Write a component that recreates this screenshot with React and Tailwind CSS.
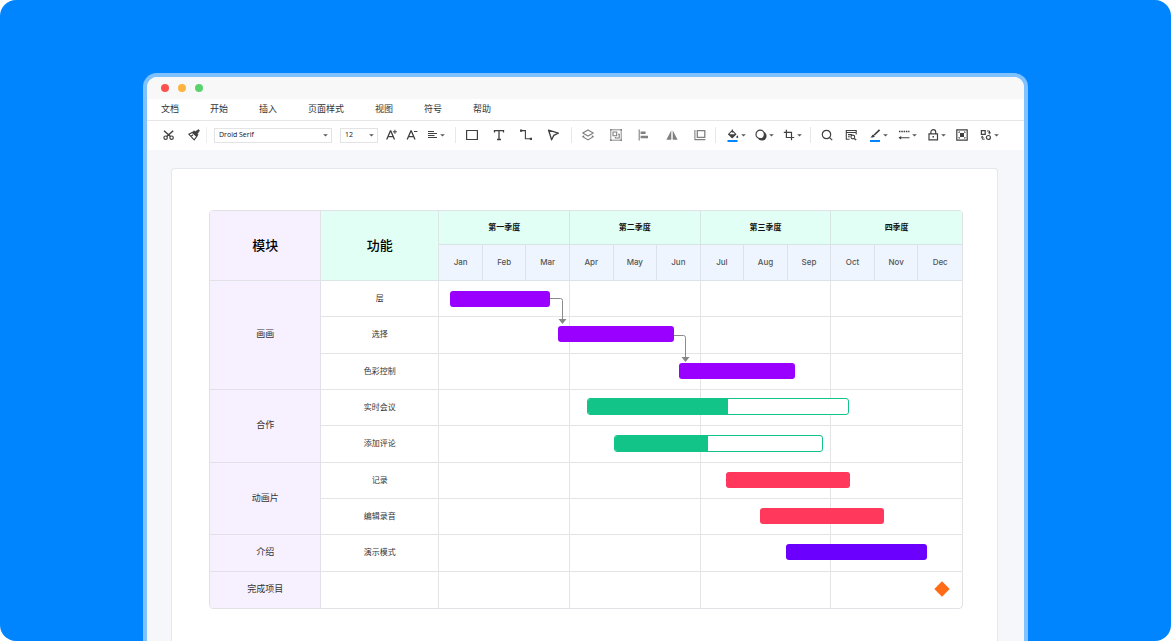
import React from "react";
import clsx from "clsx";

const MENU = ["文档", "开始", "插入", "页面样式", "视图", "符号", "帮助"];

const QUARTERS = ["第一季度", "第二季度", "第三季度", "四季度"];

const MONTHS = ["Jan", "Feb", "Mar", "Apr", "May", "Jun", "Jul", "Aug", "Sep", "Oct", "Nov", "Dec"];

const ROWS = [
  { module: "画画", span: 3, feature: "层", height: "h-9" },
  { feature: "选择", height: "h-[37px]" },
  { feature: "色彩控制", height: "h-9" },
  { module: "合作", span: 2, feature: "实时会议", height: "h-9" },
  { feature: "添加评论", height: "h-[37px]" },
  { module: "动画片", span: 2, feature: "记录", height: "h-9" },
  { feature: "编辑录音", height: "h-9" },
  { module: "介绍", span: 1, feature: "演示模式", height: "h-[37px]" },
  { module: "完成项目", span: 1, feature: "", height: "h-9" },
];

// start / end are in months from the beginning of the year, top in px from the table's top
const TASKS = [
  { id: 1, start: 0.25, end: 2.55, top: 80, color: "bg-[#9900ff]" },
  { id: 2, start: 2.73, end: 5.39, top: 115, color: "bg-[#9900ff]" },
  { id: 3, start: 5.5, end: 8.17, top: 152, color: "bg-[#9900ff]" },
  { id: 4, start: 3.39, end: 9.4, top: 187, progress: 54 },
  { id: 5, start: 4.01, end: 8.8, top: 224, progress: 45 },
  { id: 6, start: 6.58, end: 9.43, top: 261, color: "bg-[#ff385c]" },
  { id: 7, start: 7.36, end: 10.21, top: 297, color: "bg-[#ff385c]" },
  { id: 8, start: 7.95, end: 11.19, top: 333, color: "bg-[#6c00ff]" },
];

const LINKS = [
  { id: "1-2", at: 2.55, top: 87, drop: 26, run: 13 },
  { id: "2-3", at: 5.39, top: 124, drop: 27, run: 12 },
];

const MILESTONE = { at: 11.54, top: 370 };

const toPercent = (month) => `${(month / 12) * 100}%`;

const Icon = ({ children, muted }) => (
  <svg
    viewBox="0 0 12 12"
    className={clsx("size-3 shrink-0 overflow-visible", muted ? "text-[#808080]" : "text-[#404040]")}
    fill="none"
    stroke="currentColor"
    strokeWidth="1.1"
    aria-hidden="true"
  >
    {children}
  </svg>
);

const Caret = () => (
  <svg viewBox="0 0 5 3" className="h-[3px] w-[5px] shrink-0" fill="#555555" aria-hidden="true">
    <path d="M.2.3h4.600L2.500 2.600z" />
  </svg>
);

const Tool = ({ label, caret, muted, children }) => (
  <button
    type="button"
    aria-label={label}
    className={clsx("flex shrink-0 items-center gap-0.5", caret && "-mr-0.5")}
  >
    <Icon muted={muted}>{children}</Icon>
    {caret && <Caret />}
  </button>
);

const Select = ({ label, options, className }) => (
  <div className={clsx("relative flex h-4 shrink-0 items-center", className)}>
    <select
      aria-label={label}
      className="h-[15px] w-full appearance-none border border-[#e3e3e3] bg-white pl-1 font-['Open_Sans',sans-serif] text-[7px] leading-3 text-[#111111]"
    >
      {options.map((option) => (
        <option key={option}>{option}</option>
      ))}
    </select>
    <span className="pointer-events-none absolute inset-y-0 right-1 flex items-center">
      <Caret />
    </span>
  </div>
);

const Toolbar = () => (
  <div className="flex h-[29px] items-center overflow-hidden pb-px pl-4">
    <div className="flex h-4 items-center gap-[13px] border-r border-[#efefef] pr-1.5">
      <Tool label="剪切">
        <circle cx="2.6" cy="8.700" r="1.700" strokeWidth="1.200" />
        <circle cx="8.600" cy="8.700" r="1.700" strokeWidth="1.200" />
        <path d="M1 1.800 7.500 7.500M10.200 1.800 3.700 7.500" strokeWidth="1.500" />
      </Tool>
      <Tool label="格式刷">
        <path d="M.8 5.200 4.200 3.400 8.800 7.400 6.200 10.800z" />
        <path d="M4.200 3.400 6 1.800l1.400.8L10.600.6l.9.9-2 3.200.6 1.200-1.500 1.700z" fill="currentColor" strokeWidth="0.600" />
        <path d="M3.200 7.200 5 5.800" />
      </Tool>
    </div>

    <div className="flex h-4 items-center gap-2 border-r border-[#e8e8e8] pr-3 pl-[7px]">
      <Select label="字体" options={["Droid Serif"]} className="w-[118px]" />
      <Select label="字号" options={["12"]} className="w-[38px]" />
      <Tool label="增大字号">
        <path d="M.7 10.400 4.400 2h.4l3.700 8.400M2.100 7.600h5" strokeWidth="1.300" />
        <path d="M8.900.8v4M6.900 2.800h4" strokeWidth="1" />
      </Tool>
      <Tool label="减小字号">
        <path d="M1.200 10.400 4.900 2h.4L9 10.400M2.600 7.600h5" strokeWidth="1.300" />
        <path d="M8 2.500h3.400" strokeWidth="1" />
      </Tool>
      <Tool label="对齐" caret>
        <path d="M2 2.500h6M2 4.500h9M2 6.500h6.500M2 8.500h9" />
      </Tool>
    </div>

    <div className="flex h-4 items-center gap-[15px] border-r border-[#e8e8e8] pr-3 pl-2.5">
      <Tool label="矩形">
        <path d="M.6 1.500h10.800v9H.6z" strokeWidth="1.200" />
      </Tool>
      <Tool label="文本">
        <path d="M1.500 3.600V1.600h9v2M6 1.600v9M4 10.500h4" strokeWidth="1.300" />
      </Tool>
      <Tool label="连接线">
        <path d="M1 1.600h4.400v8.200H11" />
        <path d="M0 .5h2.200v2.200H0zM9.800 8.700H12v2.200H9.800z" fill="currentColor" stroke="none" />
      </Tool>
      <Tool label="选择">
        <path d="M1.600 1.200 11.300 4.200 6.800 6.400 4.600 10.800z" strokeWidth="1.300" strokeLinejoin="round" />
      </Tool>
    </div>

    <div className="flex h-4 items-center gap-4 border-r border-[#e8e8e8] pr-[9px] pl-2.5">
      <Tool label="图层" muted>
        <path d="M6 1 11.200 4 6 7 .8 4z" />
        <path d="M2.200 6.800.8 7.800 6 10.900 11.200 7.800 9.800 6.800" />
      </Tool>
      <Tool label="组合" muted>
        <path d="M.8.8h10.400v10.400H.8z" strokeWidth="0.900" />
        <path d="M3 3h3.700v3.700H3zM8 5.200h1.200V9H5.400V8" />
        <path d="M0 0h1.600v1.600H0zM10.400 0H12v1.600h-1.600zM0 10.400h1.600V12H0zM10.400 10.400H12V12h-1.600z" fill="currentColor" stroke="none" />
      </Tool>
      <Tool label="左对齐" muted>
        <path d="M1.200.5v11" />
        <path d="M2.600 2.400h5v2.500h-5zM2.600 6.800H10v2.500H2.600z" fill="currentColor" stroke="none" />
      </Tool>
      <Tool label="翻转" muted>
        <path d="M5.300 1.200v9.600H.4zM6.700 1.200v9.600h4.900z" fill="currentColor" stroke="none" />
      </Tool>
      <Tool label="等大小" muted>
        <path d="M3.300 1.600h7.500v6.800H3.300z" strokeWidth="1.300" />
        <path d="M.9 1v9.600h10.500" />
      </Tool>
    </div>

    <div className="flex h-4 items-center gap-[11px] border-r border-[#e8e8e8] pr-2.5 pl-[11px]">
      <Tool label="填充" caret>
        <path d="M5.400.4v3M5.200 1.600 1.600 5.200 5.200 8.700 8.800 5.200z" />
        <path d="M1.600 5.200h7.200L5.200 8.700zM10.300 6.200c.7 1 1 1.500 1 1.900a1 1 0 0 1-2 0c0-.4.3-.9 1-1.900z" fill="currentColor" stroke="none" />
        <path d="M.5 12h10" stroke="#0085ff" strokeWidth="2" />
      </Tool>
      <Tool label="阴影" caret>
        <circle cx="7" cy="7" r="4.600" fill="currentColor" stroke="none" />
        <circle cx="5.200" cy="5.400" r="4.200" fill="white" strokeWidth="1.200" />
      </Tool>
      <Tool label="裁剪" caret>
        <path d="M3.400.8v7.700h7.800M.8 3.400h7.700v7.800" strokeWidth="1.200" />
      </Tool>
    </div>

    <div className="flex h-4 items-center gap-3 pl-2.5">
      <Tool label="搜索">
        <circle cx="5.500" cy="5.500" r="4.200" strokeWidth="1.200" />
        <path d="m8.600 8.600 2.600 2.600" strokeWidth="1.200" />
      </Tool>
      <Tool label="查找">
        <path d="M4.500 10.300H1.300V1.500h9.900v4M1.300 3.500h9.900M3 5.600h4M3 7.700h1.800" />
        <circle cx="7.800" cy="8" r="1.900" />
        <path d="m9.200 9.400 2 1.700" strokeWidth="1.300" />
      </Tool>
      <Tool label="线条颜色" caret>
        <path d="M10.600.8 5.200 6" strokeWidth="1.700" />
        <path d="M4.200 5.400 6 7.200C5 8.500 3 8.600 1.300 8.400c1.300-.8 1.500-2.400 2.900-3z" fill="currentColor" stroke="none" />
        <path d="M1 12h10" stroke="#0085ff" strokeWidth="2" />
      </Tool>
      <Tool label="线条样式" caret>
        <path d="M1 2.500h10.500" strokeWidth="1.500" strokeDasharray="1.500 .8" />
        <path d="M1.500 8.800h10" />
        <path d="M.4 8.800 3.200 7v3.600z" fill="currentColor" stroke="none" />
      </Tool>
      <Tool label="锁定" caret>
        <path d="M2 4.800h8.500v6H2zM3.900 4.800V3a2.400 2.400 0 0 1 4.800 0v1.800" strokeWidth="1.200" />
        <path d="M5.500 7h1.500v1.500H5.500z" fill="currentColor" stroke="none" />
      </Tool>
      <Tool label="适应画布">
        <path d="M.8.8h10.400v10.400H.8z" strokeWidth="1.200" />
        <path d="M4 4h4v4H4z" fill="currentColor" stroke="none" />
        <path d="M2.900 4V2.900H4M8 2.900h1.100V4M9.100 8v1.100H8M4 9.100H2.900V8" strokeWidth="0.900" />
      </Tool>
      <Tool label="替换形状" caret>
        <path d="M1.400 1.600h3.800v3.800H1.400z" strokeWidth="1.200" />
        <circle cx="8.400" cy="8.500" r="2" strokeWidth="1.200" />
        <path d="M7 2h2.500v2.500M8.200 3.600l1.300 1.200 1.300-1.200M4.600 10.200H2.300V7.500M1 8.500l1.300-1.200 1.300 1.200" strokeWidth="1" />
      </Tool>
    </div>
  </div>
);

const Bar = ({ task }) => {
  const outlined = task.progress !== undefined;
  return (
    <div
      className={clsx(
        "absolute overflow-hidden rounded-[3px]",
        outlined ? "h-[17px] border border-[#13c489] bg-white" : "h-4",
        task.color
      )}
      style={{ left: toPercent(task.start), width: toPercent(task.end - task.start), top: task.top }}
    >
      {outlined && <div className="h-full bg-[#13c489]" style={{ width: `${task.progress}%` }} />}
    </div>
  );
};

// Elbow connector that leaves the end of one bar and points down at the next
const Link = ({ link }) => {
  const { run, drop } = link;
  return (
    <svg
      className="absolute"
      width={run + 5}
      height={drop}
      style={{ left: toPercent(link.at), top: link.top }}
      fill="none"
      aria-hidden="true"
    >
      <path d={`M0 .5H${run - 2.5}q2 0 2 2V${drop - 4}`} stroke="#8a8a8a" />
      <path d={`M${run - 4.5} ${drop - 5}h8l-4 5z`} fill="#868686" />
    </svg>
  );
};

const GanttChart = () => (
  <div className="relative overflow-hidden rounded-[4px] border border-[#e2e2e6]">
    <table className="w-full table-fixed border-separate border-spacing-0 text-center text-[8px] leading-3">
      <colgroup>
        <col className="w-[14.8%]" />
        <col className="w-[15.7%]" />
        {MONTHS.map((month) => (
          <col key={month} />
        ))}
      </colgroup>
      <thead>
        <tr className="h-[34px]">
          <th rowSpan={2} className="border-r border-b border-[#e2e2e6] bg-[#f6f0ff] px-0 pt-0 pb-0.5 text-[13px] font-medium text-black">
            模块
          </th>
          <th rowSpan={2} className="border-r border-b border-[#dbe6e6] bg-[#e1fff4] px-0 pt-0 pb-0.5 text-[13px] font-medium text-black">
            功能
          </th>
          {QUARTERS.map((quarter) => (
            <th
              key={quarter}
              colSpan={3}
              className="border-r border-b border-[#d5e6e2] bg-[#e1fff4] px-0 pt-0 pb-0.5 font-bold text-[#111111] last:border-r-0"
            >
              {quarter}
            </th>
          ))}
        </tr>
        <tr className="h-9">
          {MONTHS.map((month) => (
            <th
              key={month}
              className="border-r border-b border-[#dde1ea] bg-[#eff5ff] px-0 pt-0 pb-0.5 font-[Inter,sans-serif] font-medium text-[#555555] last:border-r-0"
            >
              {month}
            </th>
          ))}
        </tr>
      </thead>
      <tbody>
        {ROWS.map((row, i) => {
          const last = i === ROWS.length - 1;
          const line = last ? "" : "border-b";
          return (
            <tr key={i} className={row.height}>
              {row.module && (
                <th
                  scope="rowgroup"
                  rowSpan={row.span}
                  className={clsx("border-r border-[#e4e0e9] bg-[#f6f0ff] px-0 pt-0 pb-0.5 text-[9px] font-normal text-[#333333]", line)}
                >
                  {row.module}
                </th>
              )}
              <td className={clsx("border-r border-[#e4e4e4] px-0 pt-0 pb-0.5 text-[#333333]", line)}>{row.feature}</td>
              {QUARTERS.map((quarter) => (
                <td key={quarter} colSpan={3} className={clsx("border-r border-[#e4e4e4] p-0 last:border-r-0", line)} />
              ))}
            </tr>
          );
        })}
      </tbody>
    </table>

    <div className="absolute inset-y-0 right-0 left-[30.5%]">
      {TASKS.map((task) => (
        <Bar key={task.id} task={task} />
      ))}
      {LINKS.map((link) => (
        <Link key={link.id} link={link} />
      ))}
      <svg
        viewBox="0 0 16 16"
        className="absolute size-4 -translate-x-1/2"
        style={{ left: toPercent(MILESTONE.at), top: MILESTONE.top }}
        role="img"
        aria-label="里程碑"
      >
        <path d="M8 .3 15.700 8 8 15.700.3 8z" fill="#ff6b16" />
      </svg>
    </div>
  </div>
);

export default function App() {
  return (
    <div className="flex min-h-screen flex-col overflow-hidden rounded-2xl bg-[#0085ff] px-[143px] pt-[73px] font-['Noto_Sans_CJK_SC',sans-serif]">
      <div className="flex flex-1 flex-col rounded-t-[14px] bg-white/50 px-1 pt-1">
        <div className="flex flex-1 flex-col overflow-hidden rounded-t-[10px] bg-white">
          <div className="flex h-[22px] items-center gap-[9px] bg-[#f8f8f8] pl-3.5">
            <span className="size-2 rounded-full bg-[#ff5050]" />
            <span className="size-2 rounded-full bg-[#ffb340]" />
            <span className="size-2 rounded-full bg-[#5bd26c]" />
          </div>

          <nav className="flex h-[22px] items-center gap-[31px] border-b border-[#e6e6e6] pb-0.5 pl-3.5 text-[9px] leading-3 text-[#333333]">
            {MENU.map((item) => (
              <button type="button" key={item}>
                {item}
              </button>
            ))}
          </nav>

          <Toolbar />

          <main className="flex flex-1 flex-col bg-[#f6f7fa] pt-[18px] pr-[26px] pl-6">
            <div className="flex-1 rounded-t-[4px] border border-b-0 border-[#e4e7ec] bg-white pt-[41px] pr-[34px] pb-8 pl-[37px]">
              <GanttChart />
            </div>
          </main>
        </div>
      </div>
    </div>
  );
}
